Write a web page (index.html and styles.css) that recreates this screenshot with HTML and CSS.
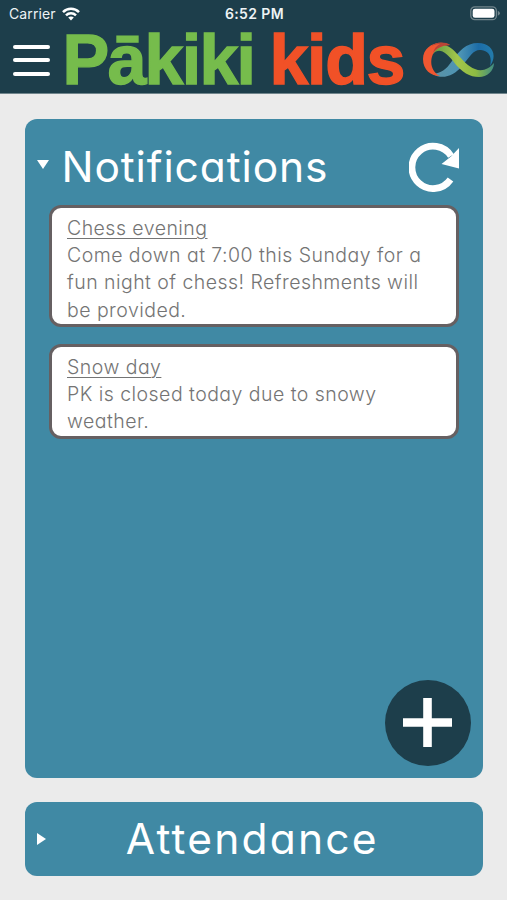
FILE: index.html
```
<!DOCTYPE html>
<html lang="en">
<head>
<meta charset="utf-8">
<meta name="viewport" content="width=device-width, initial-scale=1.0">
<title>Pākiki Kids</title>
<link rel="stylesheet" href="styles.css">
</head>
<body>
  <header class="header">
    <div class="status-bar">
      <div class="carrier">
        <span class="carrier-name">Carrier</span>
        <svg class="wifi" width="18" height="14" viewBox="0 0 18 14" fill="none" stroke="#fff" stroke-width="2.5">
          <path d="M1 5.2C5.4 .7 12.6 .7 17 5.2"/>
          <path d="M4 8.3C6.8 5.5 11.2 5.5 14 8.3"/>
          <path d="M9 13.5L6.2 10.6C7.8 9.2 10.2 9.2 11.8 10.6Z" fill="#fff" stroke="none"/>
        </svg>
      </div>
      <span class="clock">6:52 PM</span>
      <svg class="battery" width="31" height="15" viewBox="0 0 31 15">
        <rect x=".8" y=".8" width="25.6" height="12.9" rx="4" fill="none" stroke="#71858c" stroke-width="1.3"/>
        <rect x="2.7" y="2.7" width="21.8" height="9.1" rx="2.3" fill="#fff"/>
        <path d="M27.8 4.8Q30 6 30 7.2Q30 8.5 27.8 9.7Z" fill="#71858c"/>
      </svg>
    </div>
    <div class="nav">
      <button class="menu" aria-label="Menu"><span></span><span></span><span></span></button>
      <svg class="logo" width="345" height="64" viewBox="0 0 345 64">
        <text class="logo-green" x="-3.5" y="52.5" textLength="193.5" lengthAdjust="spacing">Pākiki</text>
        <text class="logo-red" x="203.5" y="52.5" textLength="136" lengthAdjust="spacing">kids</text>
      </svg>
      <svg class="infinity" width="72" height="38" viewBox="0 0 72 38">
        <defs>
          <linearGradient id="blue" x1="0" x2="1">
            <stop offset="0" stop-color="#5c93a5"/>
            <stop offset=".45" stop-color="#4c94b5"/>
            <stop offset=".75" stop-color="#1c6ca7"/>
            <stop offset="1" stop-color="#237cab"/>
          </linearGradient>
          <linearGradient id="green" x1="0" x2="1">
            <stop offset="0" stop-color="#5f9b49"/>
            <stop offset=".4" stop-color="#a4c64a"/>
            <stop offset=".7" stop-color="#8dbb43"/>
            <stop offset="1" stop-color="#3f8c83"/>
          </linearGradient>
        </defs>
        <path d="M10 33C19 39 31 35 39 25C47 15 51 8 58 9C67 10 69 17 67 25C75 14 69 2 55 2C43 2 36 10 29 20C23 29 18 32 10 33Z" fill="url(#blue)"/>
        <path d="M10 13C16 6 23 11 30 20C39 32 47 36 56 36C64 36 71 30 71 22C66 28 59 31 52 28C38 23 32 3 18 4C13 5 10 8 10 13Z" fill="url(#green)"/>
        <path d="M27 4C15-2 0 5 0 18C0 29 8 35 17 35C9 31 6 22 10 13C13 7 20 4 27 4Z" fill="#f05731"/>
        <path d="M6 7C12 1 21 0 27 4C20 4 13 7 10 12C11 8 13 5 17 3C13 3 9 4 6 7Z" fill="#b94436"/>
      </svg>
    </div>
  </header>

  <main class="main">
    <section class="panel notifications">
      <div class="panel-header">
        <span class="arrow arrow-down"></span>
        <h1 class="panel-title">Notifications</h1>
        <button class="refresh" aria-label="Refresh">
          <svg width="51" height="51" viewBox="0 0 51 51">
            <path d="M41.5 38.5A21.2 21.2 0 1 1 42 15" fill="none" stroke="#fff" stroke-width="6.8"/>
            <path d="M50 7V27.5L32.5 23L42 15.5Z" fill="#fff"/>
          </svg>
        </button>
      </div>
      <article class="card">
        <h2 class="card-title">Chess evening</h2>
        <p class="card-text">Come down at 7:00 this Sunday for a<br>fun night of chess! Refreshments will<br>be provided.</p>
      </article>
      <article class="card">
        <h2 class="card-title">Snow day</h2>
        <p class="card-text">PK is closed today due to snowy<br>weather.</p>
      </article>
      <button class="add" aria-label="Add">
        <svg width="49" height="49" viewBox="0 0 49 49">
          <path d="M24.5 0V49M0 24.5H49" stroke="#fff" stroke-width="8.6"/>
        </svg>
      </button>
    </section>

    <section class="panel attendance">
      <span class="arrow arrow-right"></span>
      <h1 class="panel-title">Attendance</h1>
    </section>
  </main>
</body>
</html>
```
FILE: styles.css
```
* {box-sizing: border-box;}

body{
  margin: 0;
  height: 900px;
  overflow: hidden;
  background-color: #ebebeb;
  font-family: Inter, "Open Sans", sans-serif;
  font-feature-settings: "cv11";
}

h1, h2, p{
  margin: 0;
  font-weight: 300;
}

button{
  padding: 0;
  border: none;
  background: none;
}

svg{
  display: block;
}

.header{
  height: 94px;
  background-color: #1d3e4b;
  border-bottom: 1px solid #70858c;
}

.status-bar{
  display: grid;
  grid-template-columns: 1fr auto 1fr;
  align-items: center;
  height: 27px;
  padding: 0 7px 0 9px;
  color: #eef3f5;
  font-size: 14px;
  font-feature-settings: normal;
}

.carrier{
  display: flex;
  align-items: center;
  gap: 6px;
}

.carrier-name{
  letter-spacing: 0.1px;
}

.clock{
  font-weight: 600;
  letter-spacing: 0.4px;
}

.battery{
  justify-self: end;
  margin-right: -1px;
}

.nav{
  display: flex;
  align-items: center;
  height: 66px;
  padding: 0 13px;
}

.menu{
  display: flex;
  flex-direction: column;
  gap: 9.5px;
  width: 37px;
  flex: none;
}

.menu span{
  height: 4px;
  border-radius: 2px;
  background-color: #fff;
}

.logo{
  flex: none;
  overflow: visible;
  margin: 5px 12px 0 16px;
  font-family: "Liberation Sans", Arial, sans-serif;
  font-weight: bold;
  font-size: 70px;
  font-feature-settings: normal;
  stroke-width: 1.4px;
}

.logo-green{
  fill: #76bc4c;
  stroke: #76bc4c;
}

.logo-red{
  fill: #f15127;
  stroke: #f15127;
}

.infinity{
  flex: none;
}

.main{
  display: flex;
  flex-direction: column;
  gap: 24.5px;
  padding: 24.5px 24.5px 0 25px;
}

.panel{
  border-radius: 12px;
  background-color: #4089a4;
  color: #fff;
}

.panel-title{
  font-size: 42.5px;
  font-weight: 400;
  line-height: 60px;
}

.notifications{
  display: flex;
  flex-direction: column;
  height: 659px;
  padding: 18px 12px 12px;
}

.panel-header{
  display: flex;
  align-items: center;
  height: 60px;
  margin-bottom: 8.5px;
}

.panel-header .panel-title{
  margin-left: 12.5px;
  letter-spacing: 0.9px;
}

.arrow{
  flex: none;
}

.arrow-down{
  margin-top: -4px;
  border-left: 6.5px solid transparent;
  border-right: 6.5px solid transparent;
  border-top: 9px solid #fff;
}

.arrow-right{
  border-top: 6.5px solid transparent;
  border-bottom: 6.5px solid transparent;
  border-left: 9px solid #fff;
}

.refresh{
  margin-left: auto;
  margin-right: 11px;
}

.card{
  margin: 0 12px 17px;
  padding: 6.5px 15px 0;
  border: 3px solid #666062;
  border-radius: 12px;
  background-color: #fff;
  color: #747474;
  font-size: 19.5px;
  line-height: 27.4px;
  letter-spacing: 0.46px;
}

.card-title{
  font-size: inherit;
  text-decoration: underline;
  text-decoration-thickness: 1.3px;
  text-underline-offset: 3px;
}

.card-text{
  white-space: nowrap;
}

.add{
  display: flex;
  align-items: center;
  justify-content: center;
  align-self: flex-end;
  width: 86px;
  height: 86px;
  margin-top: auto;
  border-radius: 50%;
  background-color: #1d3e4b;
}

.attendance{
  display: flex;
  align-items: center;
  height: 73.5px;
  padding: 0 24px 0 12px;
}

.attendance .panel-title{
  flex: 1;
  text-align: center;
  letter-spacing: 2.2px;
}
```
